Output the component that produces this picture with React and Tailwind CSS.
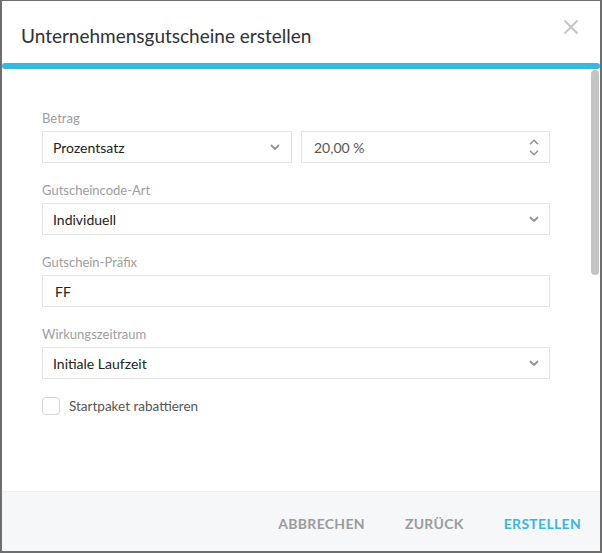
import React from 'react';

const font = { fontFamily: 'Lato, "Open Sans", sans-serif' };

function Chevron({ className = '' }) {
    return (
        <svg width="10" height="7" viewBox="0 0 10 7" className={className}>
            <path d="M1.5 1.5 L5 5 L8.5 1.5" fill="none" stroke="#949494" strokeWidth="1.8" strokeLinecap="round" strokeLinejoin="round" />
        </svg>
    );
}

function Label({ children }) {
    return <div className="text-[13px] leading-4 text-[#9d9d9d] mb-[5px]">{children}</div>;
}

function Select({ value, className = '' }) {
    return (
        <div className={`h-8 border border-[#e3e5e5] bg-white flex items-center justify-between pl-[10px] pr-[10px] ${className}`}>
            <span className="text-[14px] text-[#222]">{value}</span>
            <Chevron />
        </div>
    );
}

export default function App() {
    return (
        <div className="w-[602px] h-[553px] bg-[#6e6e6e] pt-px pl-[2px] pr-[2px] pb-[2px]" style={font}>
            <div className="relative h-full bg-white flex flex-col overflow-hidden">
                {/* header */}
                <div className="h-[62px] flex items-center justify-between pl-[19px] pr-[21px] shrink-0">
                    <h2 className="text-[19px] text-[#2e3136] pt-[8px]">Unternehmensgutscheine erstellen</h2>
                    <svg width="16" height="16" viewBox="0 0 16 16" className="-mt-[11px]">
                        <path d="M1.5 1.5 L14.5 14.5 M14.5 1.5 L1.5 14.5" stroke="#c4c4c4" strokeWidth="1.8" />
                    </svg>
                </div>
                <div className="h-[6px] bg-[#3bb6e2] rounded-full shrink-0"></div>

                {/* body */}
                <div className="relative flex-1 pt-[41px] pl-[40px] pr-[50px]">
                    <Label>Betrag</Label>
                    <div className="flex gap-[9px]">
                        <Select value="Prozentsatz" className="w-[250px] pr-[11px]" />
                        <div className="flex-1 h-8 border border-[#e3e5e5] flex items-center justify-between pl-[12px] pr-[10px]">
                            <span className="text-[14px] text-[#555]">20,00 %</span>
                            <div className="flex flex-col gap-[5px]">
                                <svg width="10" height="6" viewBox="0 0 10 6">
                                    <path d="M1 5.2 L5 1.2 L9 5.2" fill="none" stroke="#8a8a8a" strokeWidth="1.3" />
                                </svg>
                                <svg width="10" height="6" viewBox="0 0 10 6">
                                    <path d="M1 0.8 L5 4.8 L9 0.8" fill="none" stroke="#8a8a8a" strokeWidth="1.3" />
                                </svg>
                            </div>
                        </div>
                    </div>

                    <div className="mt-[19px]">
                        <Label>Gutscheincode-Art</Label>
                        <Select value="Individuell" />
                    </div>

                    <div className="mt-[19px]">
                        <Label>Gutschein-Präfix</Label>
                        <div className="h-8 border border-[#e3e5e5] flex items-center pl-[12px]">
                            <span className="text-[14px] text-[#222]">FF</span>
                        </div>
                    </div>

                    <div className="mt-[19px]">
                        <Label>Wirkungszeitraum</Label>
                        <Select value="Initiale Laufzeit" />
                    </div>

                    <label className="mt-[17px] flex items-center gap-[9px]">
                        <span className="w-[18px] h-[18px] border border-[#d5d5d5] rounded-[4px] bg-white"></span>
                        <span className="text-[13.5px] text-[#555]">Startpaket rabattieren</span>
                    </label>

                    {/* scrollbar thumb */}
                    <div className="absolute right-[1px] top-[1px] w-[8px] h-[205px] rounded-full bg-[#c4c4c4]"></div>
                </div>

                {/* footer */}
                <div className="h-[60px] shrink-0 bg-[#f6f7f9] border-t border-[#eceef0] flex items-center justify-end gap-[40px] pr-[19px] pt-[3px] text-[14px] font-bold tracking-[0.3px]">
                    <button className="text-[#9b9b9b]">ABBRECHEN</button>
                    <button className="text-[#9b9b9b]">ZURÜCK</button>
                    <button className="text-[#3bb6e2]">ERSTELLEN</button>
                </div>
            </div>
        </div>
    );
}
